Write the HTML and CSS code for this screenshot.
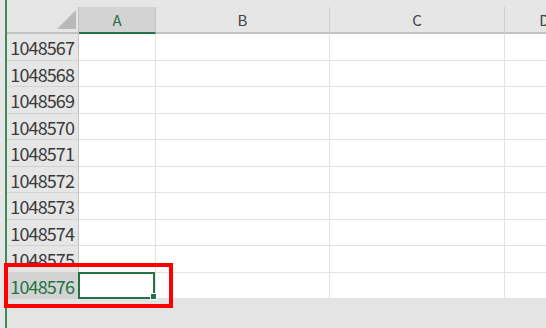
FILE: index.html
```html
<!DOCTYPE html>
<html>
<head>
    <title>Sheet1</title>
    <link rel="stylesheet" href="styles.css">
</head>
<body>

<div id="app">
    <div id="edge"></div>
    <div id="rule"></div>

    <div id="sheet">
        <div id="grid">
            <div class="colHead corner"><span class="tri"></span></div>
            <div class="colHead active">A</div>
            <div class="colHead">B</div>
            <div class="colHead">C</div>
            <div class="colHead last">D</div>

            <div class="rowHead">1048567</div><div class="cell"></div><div class="cell"></div><div class="cell"></div><div class="cell last"></div>
            <div class="rowHead">1048568</div><div class="cell"></div><div class="cell"></div><div class="cell"></div><div class="cell last"></div>
            <div class="rowHead">1048569</div><div class="cell"></div><div class="cell"></div><div class="cell"></div><div class="cell last"></div>
            <div class="rowHead">1048570</div><div class="cell"></div><div class="cell"></div><div class="cell"></div><div class="cell last"></div>
            <div class="rowHead">1048571</div><div class="cell"></div><div class="cell"></div><div class="cell"></div><div class="cell last"></div>
            <div class="rowHead">1048572</div><div class="cell"></div><div class="cell"></div><div class="cell"></div><div class="cell last"></div>
            <div class="rowHead">1048573</div><div class="cell"></div><div class="cell"></div><div class="cell"></div><div class="cell last"></div>
            <div class="rowHead">1048574</div><div class="cell"></div><div class="cell"></div><div class="cell"></div><div class="cell last"></div>
            <div class="rowHead">1048575</div><div class="cell"></div><div class="cell"></div><div class="cell"></div><div class="cell last"></div>
            <div class="rowHead active">1048576</div><div class="cell sel"><span class="handle"></span></div><div class="cell"></div><div class="cell"></div><div class="cell last"></div>
        </div>
        <div id="footer"></div>
    </div>

    <div id="callout"></div>
</div>

</body>
</html>
```

FILE: styles.css
```css
body {
    margin: 0;
    height: 328px;
    overflow: hidden;
    background: #e6e6e6;
    font-family: "Noto Sans CJK JP", "Noto Sans", sans-serif;
}

#app {
    position: relative;
    display: flex;
    height: 328px;
}

#edge {
    width: 5px;
    background: #e6e6e6;
}

#rule {
    width: 2px;
    background: #3f8a5b;
}

#sheet {
    flex: 1;
    display: flex;
    flex-direction: column;
    padding-top: 7px;
    overflow: hidden;
}

#grid {
    display: grid;
    grid-template-columns: 72px 77px 174px 175px 80px;
    grid-template-rows: 27px repeat(10, 26.5px);
    background: #ffffff;
}

#footer {
    flex: 1;
    background: #e4e4e4;
}

/*---------Headers-------------*/
.colHead {
    box-sizing: border-box;
    background: #e6e6e6;
    border-right: 1px solid #cfcfcf;
    border-bottom: 2px solid #c2c2c2;
    color: #444;
    font-size: 15px;
    line-height: 25px;
    text-align: center;
}
.colHead.active {
    background: #d3d3d3;
    color: #217346;
    border-bottom-color: #217346;
    border-right-color: #c2c2c2;
}
.colHead.corner {
    position: relative;
    border-right: 1px solid #c2c2c2;
}
.tri {
    position: absolute;
    right: 2px;
    bottom: 3px;
    width: 19px;
    height: 19px;
    background: #b9b9b9;
    clip-path: polygon(100% 0, 100% 100%, 0 100%);
}

.rowHead {
    box-sizing: border-box;
    background: #e6e6e6;
    border-right: 1px solid #c2c2c2;
    border-bottom: 1px solid #d2d2d2;
    color: #3a3a3a;
    font-size: 18px;
    letter-spacing: -0.9px;
    line-height: 26px;
    text-align: right;
    padding-right: 4px;
}
.rowHead.active {
    background: #d3d3d3;
    color: #217346;
}

/*---------Cells-------------*/
.cell {
    box-sizing: border-box;
    border-right: 1px solid #e2e2e2;
    border-bottom: 1px solid #e2e2e2;
}

.cell.sel {
    position: relative;
}
.cell.sel::after {
    content: "";
    position: absolute;
    left: -1px;
    top: -1px;
    right: 0;
    bottom: -1px;
    border: 2px solid #217346;
}
.handle {
    position: absolute;
    right: -2px;
    bottom: -2px;
    width: 5px;
    height: 5px;
    background: #217346;
    border: 1px solid #ffffff;
    z-index: 1;
}

#callout {
    position: absolute;
    left: 4px;
    top: 263px;
    width: 161px;
    height: 37px;
    border: 4px solid #ff0000;
}
```
